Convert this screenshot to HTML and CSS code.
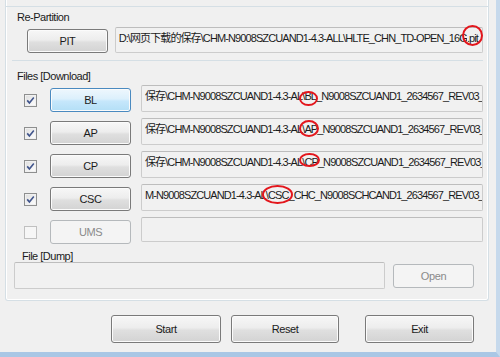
FILE: index.html
```html
<html lang="zh-CN">

<head>
    <meta charset="UTF-8">
    <meta name="viewport" content="width=device-width, initial-scale=1.0">
    <title>Odin</title>

    <link rel="stylesheet" href="styles.css">
</head>

<body>
    <div class="window">
        <div class="frame">
            <div class="frame-cap"></div>

            <section class="group repart">
                <div class="group-label">Re-Partition</div>
                <div class="pit-row">
                    <button class="btn">PIT</button>
                    <div class="field field-pit">
                        <span class="clip-end"><span>D:\网页下载的保存\CHM-N9008SZCUAND1-4.3-ALL\HLTE_CHN_TD-OPEN_16G</span></span><span class="mark mark-pit">.pit</span>
                    </div>
                </div>
            </section>

            <section class="group files">
                <div class="group-label">Files [Download]</div>
                <div class="file-rows">
                    <div class="file-row">
                        <span class="check"><svg viewBox="0 0 11 11" width="11" height="11"><path d="M2.2 5.4 L4.4 7.9 L8.8 2.6" /></svg></span>
                        <button class="btn btn-hover">BL</button>
                        <div class="field">保存\CHM-N9008SZCUAND1-4.3-AL<span class="mark mark-bl">\BL</span>_N9008SZCUAND1_2634567_REV03_user_low_ship.tar.md5</div>
                    </div>
                    <div class="file-row">
                        <span class="check"><svg viewBox="0 0 11 11" width="11" height="11"><path d="M2.2 5.4 L4.4 7.9 L8.8 2.6" /></svg></span>
                        <button class="btn">AP</button>
                        <div class="field">保存\CHM-N9008SZCUAND1-4.3-AL<span class="mark mark-ap">\AP</span>_N9008SZCUAND1_2634567_REV03_user_low_ship.tar.md5</div>
                    </div>
                    <div class="file-row">
                        <span class="check"><svg viewBox="0 0 11 11" width="11" height="11"><path d="M2.2 5.4 L4.4 7.9 L8.8 2.6" /></svg></span>
                        <button class="btn">CP</button>
                        <div class="field">保存\CHM-N9008SZCUAND1-4.3-AL<span class="mark mark-cp">\CP</span>_N9008SZCUAND1_2634567_REV03_user_low_ship.tar.md5</div>
                    </div>
                    <div class="file-row">
                        <span class="check"><svg viewBox="0 0 11 11" width="11" height="11"><path d="M2.2 5.4 L4.4 7.9 L8.8 2.6" /></svg></span>
                        <button class="btn">CSC</button>
                        <div class="field">M-N9008SZCUAND1-4.3-AL<span class="mark mark-csc">\CSC</span>_CHC_N9008SCHCAND1_2634567_REV03_user_low_ship.tar.md5</div>
                    </div>
                    <div class="file-row">
                        <span class="check check-off"></span>
                        <button class="btn" disabled>UMS</button>
                        <div class="field field-empty"></div>
                    </div>
                </div>
            </section>

            <section class="group dump">
                <div class="group-label">File [Dump]</div>
                <div class="dump-row">
                    <div class="field field-dump"></div>
                    <button class="btn" disabled>Open</button>
                </div>
            </section>
        </div>

        <div class="actions">
            <button class="btn btn-start">Start</button>
            <button class="btn btn-reset">Reset</button>
            <button class="btn btn-exit">Exit</button>
        </div>
    </div>
</body>

</html>
```

FILE: styles.css
```css
* {
    box-sizing: border-box;
}

body {
    margin: 0;
    background-color: #f0f0f0;
    font-family: "Liberation Sans", "Noto Sans CJK SC", sans-serif;
    font-size: 11px;
    color: #1b1b1b;
}

.window {
    width: 500px;
    height: 357px;
    background-color: #f0f0f0;
    border-right: 4px solid #c6d9ec;
    border-bottom: 5px solid #a9c7e5;
    display: flex;
    flex-direction: column;
    overflow: hidden;
}

.frame {
    margin-left: 5px;
    width: 484px;
    height: 301px;
    border: 1px solid #d5dfe5;
    border-top: 0;
    border-radius: 0 0 3px 3px;
    box-shadow: inset 1px 0 #fff, inset -1px 0 #fff, inset 0 -1px #fff;
    display: flex;
    flex-direction: column;
}

.frame-cap {
    height: 7px;
    border-bottom: 1px solid #d5dfe5;
}

.group {
    margin: 0 5px 0 6px;
}

.group-label {
    padding-left: 5px;
    line-height: 13px;
    letter-spacing: -0.5px;
}

/* Re-Partition */
.repart {
    padding-top: 4px;
    padding-bottom: 7px;
    border-bottom: 1px solid #d5dfe5;
}

.pit-row {
    display: flex;
    align-items: flex-end;
    gap: 7px;
    padding-left: 15px;
    margin-top: 3px;
    height: 26px;
}

.btn {
    flex-shrink: 0;
    width: 81px;
    height: 24px;
    padding: 0;
    border: 1px solid #7a7a7a;
    border-radius: 3px;
    background: linear-gradient(#f7f7f7, #ededed 45%, #dfdfdf 55%, #d3d3d3);
    box-shadow: inset 0 0 0 1px #fbfbfb;
    font-family: inherit;
    font-size: 11px;
    letter-spacing: -0.4px;
    color: #1b1b1b;
}

.btn-hover {
    border-color: #4a8ac0;
    background: linear-gradient(#eef7fd, #dcf0fc 45%, #c6e7fb 55%, #b3dff6);
}

.btn:disabled {
    border-color: #b5b9bc;
    background: #f4f4f4;
    box-shadow: none;
    color: #8a8a8a;
}

.field {
    flex: 1;
    min-width: 0;
    height: 27px;
    padding: 3px 3px 0 3px;
    border: 1px solid #cccccc;
    border-top-color: #bdbdbd;
    border-radius: 2px;
    background-color: #f1f1f1;
    line-height: 14px;
    letter-spacing: -0.9px;
    white-space: nowrap;
    overflow: hidden;
}

.field-pit {
    display: flex;
    align-items: flex-start;
    height: 26px;
    overflow: visible;
    padding-right: 4px;
}

.clip-end {
    flex: 1;
    min-width: 0;
    display: flex;
    justify-content: flex-end;
    overflow: hidden;
}

.clip-end span {
    flex-shrink: 0;
}

/* red annotation rings */
.mark {
    position: relative;
}

.mark::after {
    content: "";
    position: absolute;
    top: -3px;
    bottom: -2px;
    left: -3px;
    right: -2px;
    border: 2px solid #e3161c;
    border-radius: 50%;
}

.mark-pit {
    height: 14px;
}

.mark-pit::after {
    top: -6px;
    bottom: -1px;
    left: -5px;
    right: -5px;
}

.mark-bl::after {
    top: 1px;
    bottom: -4px;
}

.mark-cp::after {
    top: -3px;
    bottom: 1px;
}

.mark-csc::after {
    top: -4px;
    bottom: -3px;
    left: -4px;
    right: -4px;
}

/* Files [Download] */
.files {
    padding-top: 9px;
}

.file-rows {
    margin-top: 2px;
    display: flex;
    flex-direction: column;
    gap: 6px;
}

.file-row {
    display: flex;
    align-items: flex-end;
    padding-left: 12px;
    height: 27px;
}

.file-row .btn {
    margin-left: 13px;
    margin-right: 10px;
}

.check {
    flex-shrink: 0;
    width: 13px;
    height: 13px;
    margin-bottom: 5px;
    border: 1px solid #8e8f8f;
    background: linear-gradient(135deg, #dcdcdc, #f6f6f6 70%, #fdfdfd);
    box-shadow: inset 0 0 0 1px #f0f0f0;
    display: flex;
}

.check svg {
    fill: none;
    stroke: #41558c;
    stroke-width: 1.6;
}

.check-off {
    border-color: #c0c0c0;
    background: #f6f6f6;
    box-shadow: none;
}

.field-empty {
    height: 25px;
    margin-bottom: 2px;
}

/* File [Dump] */
.dump {
    padding-top: 7px;
}

.dump .group-label {
    padding-left: 10px;
    line-height: 11px;
}

.dump-row {
    display: flex;
    align-items: center;
    gap: 8px;
    padding-left: 2px;
    padding-right: 9px;
}

.field-dump {
    flex: none;
    width: 371px;
}

/* bottom buttons */
.actions {
    display: flex;
    justify-content: flex-end;
    margin-top: 14px;
    padding-right: 22px;
}

.actions .btn {
    height: 28px;
}

.btn-start {
    width: 110px;
    margin-right: 10px;
}

.btn-reset {
    width: 108px;
    margin-right: 26px;
}

.btn-exit {
    width: 109px;
}
```
